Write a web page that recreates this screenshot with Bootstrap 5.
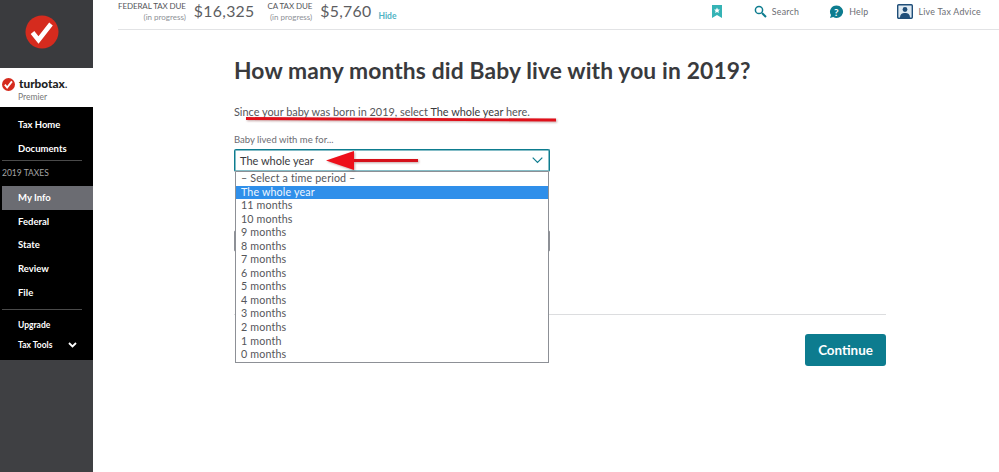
<!DOCTYPE html>
<html lang="en">
<head>
    <meta charset="UTF-8">
    <meta name="viewport" content="width=device-width, initial-scale=1.0">
    <title>TurboTax</title>
    <link href="https://cdn.jsdelivr.net/npm/bootstrap@5.3.0/dist/css/bootstrap.min.css" rel="stylesheet">
    <style>
        html, body { height: 100%; }
        body { font-family: Lato, "Liberation Sans", sans-serif; color: #393a3d; background: #fff; overflow: hidden; }

        /* sidebar */
        .side { width: 93px; height: 472px; background: #3f4043; flex: none; }
        .side-top { height: 68px; background: #3a3b3e; padding: 15px 0 0 25px; }
        .side-top svg { display: block; }
        .brand { height: 39px; background: #fff; padding: 9px 0 0 2px; }
        .brand-row { height: 14px; }
        .brand-name { font-size: 11.8px; font-weight: 900; line-height: 14px; color: #222; }
        .brand-sub { font-size: 8.5px; line-height: 9px; color: #777; padding-left: 16px; margin-top: 2px; }
        .side-nav { height: 253px; background: #000; color: #fff; font-size: 9.5px; font-weight: 700; padding-top: 6px; }
        .side-link { height: 23.6px; line-height: 23.6px; padding-left: 18px; }
        .side-link.now { background: #6b6c72; margin-left: 2px; padding-left: 16px; }
        .side-sep { height: 1px; background: #4a4a4a; margin: 0 11px 0 2px; }
        .side-sep.low { margin-top: 5px; margin-bottom: 5px; }
        .side-head { font-size: 8.5px; font-weight: 400; color: #a5a5a5; padding: 6px 0 6px 2px; line-height: 13px; }
        .side-small { font-size: 8.5px; height: 20px; line-height: 20px; padding-left: 18px; }

        /* top bar */
        .topbar { height: 30px; margin-left: 25px; border-bottom: 1px solid #e2e3e5; font-size: 8.5px; color: #6b6c72; }
        .due { text-align: right; line-height: 11px; padding-top: 1px; }
        .due-l { font-size: 8px; color: #55565a; letter-spacing: -.1px; }
        .due-s { font-size: 8px; color: #8d9096; }
        .amount { font-size: 15.8px; color: #5c5d61; line-height: 22px; letter-spacing: .3px; }
        .gap-fed { margin-left: 8px; }
        .gap-ca { margin-left: 13px; }
        .hide-link { color: #4fb3c4; font-size: 8.5px; font-weight: 700; margin-left: 7px; padding-top: 10px; }
        .top-tool { color: #6b6c72; font-size: 8.8px; letter-spacing: .25px; padding-top: 4px; margin-right: 18px; }
        .ic-search { margin-left: 32px; }
        .ic-help { margin-left: 30px; }
        .ic-live { margin-left: 29px; }
        .tool-txt { margin-left: 5px; }

        /* question */
        .question { width: 652px; margin-left: 141px; padding-top: 27px; position: relative; }
        .question h1 { font-size: 22.8px; font-weight: 700; color: #393a3d; margin: 0; line-height: 27px; letter-spacing: .14px; }
        .lead-in { font-size: 10.9px; line-height: 14px; margin: 21px 0 0; color: #55565a; }
        .lead-in b { font-weight: 400; color: #393a3d; }
        .field-label { font-size: 9.5px; line-height: 12px; margin: 15px 0 0; color: #6b6c72; }
        .fake-select { width: 316px; height: 23px; border: 1px solid #0d7c8f; border-bottom-color: #8d9096; border-radius: 2px; margin-top: 3px; padding: 0 6px 0 5px; font-size: 11px; line-height: 21px; color: #393a3d; box-shadow: inset 0 0 0 .5px #0d7c8f; }
        .under-select { width: 316px; height: 22px; border: 1px solid #8d9096; border-radius: 2px; margin-top: 58px; }
        .rule { height: 1px; background: #dcdddf; margin-top: 62px; }
        .continue-btn { background: #0d7c8f; border: 0; border-radius: 3px; color: #fff; font-size: 13.4px; font-weight: 700; width: 81px; height: 32px; padding: 0; margin-top: 19px; }

        /* open list of the select */
        .drop { position: absolute; left: 1px; top: 142px; width: 314px; background: #fff; border: 1px solid #8d9096; border-top: 0; font-size: 10.7px; color: #55565a; letter-spacing: .15px; }
        .drop-item { height: 13.55px; line-height: 12px; padding-left: 5px; }
        .drop-item.picked { background: #2f8fea; color: #eef6ff; }

        /* red marks drawn over the shot */
        .marks { position: absolute; left: 0; top: 0; pointer-events: none; filter: drop-shadow(1px 1px 1px rgba(90, 0, 0, .35)); }
    </style>
</head>
<body>
<div class="d-flex">
    <div class="side">
        <div class="side-top">
            <svg width="34" height="34" viewBox="0 0 34 34">
                <circle cx="17" cy="17" r="16.5" fill="#d52b1e"/>
                <path d="M7.500 17.500l6 7.500L26 9" fill="none" stroke="#fff" stroke-width="4.600"/>
            </svg>
        </div>
        <div class="brand">
            <div class="brand-row d-flex align-items-center gap-1">
                <svg width="13" height="13" viewBox="0 0 34 34">
                    <circle cx="17" cy="17" r="17" fill="#d52b1e"/>
                    <path d="M7.500 17.500l6 7.500L26 9" fill="none" stroke="#fff" stroke-width="5"/>
                </svg>
                <span class="brand-name">turbotax<span class="fw-normal">.</span></span>
            </div>
            <div class="brand-sub">Premier</div>
        </div>
        <div class="side-nav">
            <div class="side-link">Tax Home</div>
            <div class="side-link">Documents</div>
            <div class="side-sep"></div>
            <div class="side-head">2019 TAXES</div>
            <div class="side-link now">My Info</div>
            <div class="side-link">Federal</div>
            <div class="side-link">State</div>
            <div class="side-link">Review</div>
            <div class="side-link">File</div>
            <div class="side-sep low"></div>
            <div class="side-small">Upgrade</div>
            <div class="side-small d-flex justify-content-between align-items-center pe-3">
                <span>Tax Tools</span>
                <svg width="9" height="6" viewBox="0 0 9 6"><path d="M1 1l3.500 3.500L8 1" fill="none" stroke="#fff" stroke-width="1.800"/></svg>
            </div>
        </div>
    </div>

    <div class="flex-grow-1">
        <div class="topbar d-flex align-items-start">
            <div class="due"><div class="due-l">FEDERAL TAX DUE</div><div class="due-s">(in progress)</div></div>
            <div class="amount gap-fed">$16,325</div>
            <div class="due gap-ca"><div class="due-l">CA TAX DUE</div><div class="due-s">(in progress)</div></div>
            <div class="amount gap-fed">$5,760</div>
            <div class="hide-link">Hide</div>
            <div class="ms-auto d-flex align-items-center top-tool">
                <svg width="10" height="13" viewBox="0 0 10 13"><path d="M0 0h10v13L5 10 0 13z" fill="#35b3b5"/><path d="M5 2.500l.9 1.900 2 .2-1.500 1.300.5 2L5 7l-1.900 .9.5-2L2.100 4.600l2-.2z" fill="#fff"/></svg>
                <svg class="ic-search" width="13" height="13" viewBox="0 0 13 13"><circle cx="5" cy="5" r="3.600" fill="none" stroke="#0d7c8f" stroke-width="1.500"/><path d="M8 8l4 4" stroke="#0d7c8f" stroke-width="2"/></svg>
                <span class="tool-txt">Search</span>
                <svg class="ic-help" width="15" height="14" viewBox="0 0 15 14"><path d="M7.500 .5a6.500 6.200 0 1 1-3.300 11.500L1 13l1-3A6.500 6.200 0 0 1 7.500 .5z" fill="#0d7c8f"/><text x="7.500" y="10.500" font-size="10" font-weight="700" fill="#fff" text-anchor="middle" font-family="Lato">?</text></svg>
                <span class="tool-txt">Help</span>
                <svg class="ic-live" width="16" height="15" viewBox="0 0 16 15"><rect x=".7" y=".7" width="14.600" height="13.600" rx="1" fill="#dfeaf2" stroke="#1f4e79" stroke-width="1.400"/><circle cx="8" cy="5.500" r="2.400" fill="#1f4e79"/><path d="M3 14c0-4 2-5 5-5s5 1 5 5z" fill="#1f4e79"/></svg>
                <span class="tool-txt">Live Tax Advice</span>
            </div>
        </div>

        <div class="question">
            <h1>How many months did Baby live with you in 2019?</h1>
            <p class="lead-in">Since your baby was born in 2019, select <b>The whole year</b> here.</p>
            <div class="field-label">Baby lived with me for...</div>
            <div class="fake-select d-flex justify-content-between align-items-center">
                <span>The whole year</span>
                <svg width="11" height="7" viewBox="0 0 11 7"><path d="M.7 .7l4.800 4.800L10.300 .7" fill="none" stroke="#0d7c8f" stroke-width="1.200"/></svg>
            </div>
            <div class="under-select"></div>
            <div class="rule"></div>
            <div class="text-end"><button class="btn continue-btn">Continue</button></div>

            <div class="drop">
                <div class="drop-item">– Select a time period –</div>
                <div class="drop-item picked">The whole year</div>
                <div class="drop-item">11 months</div>
                <div class="drop-item">10 months</div>
                <div class="drop-item">9 months</div>
                <div class="drop-item">8 months</div>
                <div class="drop-item">7 months</div>
                <div class="drop-item">6 months</div>
                <div class="drop-item">5 months</div>
                <div class="drop-item">4 months</div>
                <div class="drop-item">3 months</div>
                <div class="drop-item">2 months</div>
                <div class="drop-item">1 month</div>
                <div class="drop-item">0 months</div>
            </div>
        </div>
    </div>
</div>

<svg class="marks" width="999" height="472" viewBox="0 0 999 472">
    <path d="M246 118.500L556 120" stroke="#e0101a" stroke-width="2.800"/>
    <path d="M346 160.500h72" stroke="#d5101a" stroke-width="3.200"/>
    <path d="M326 160.500L354 151v19z" fill="#ee0f1a"/>
</svg>

<script src="https://cdn.jsdelivr.net/npm/bootstrap@5.3.0/dist/js/bootstrap.bundle.min.js"></script>
</body>
</html>
